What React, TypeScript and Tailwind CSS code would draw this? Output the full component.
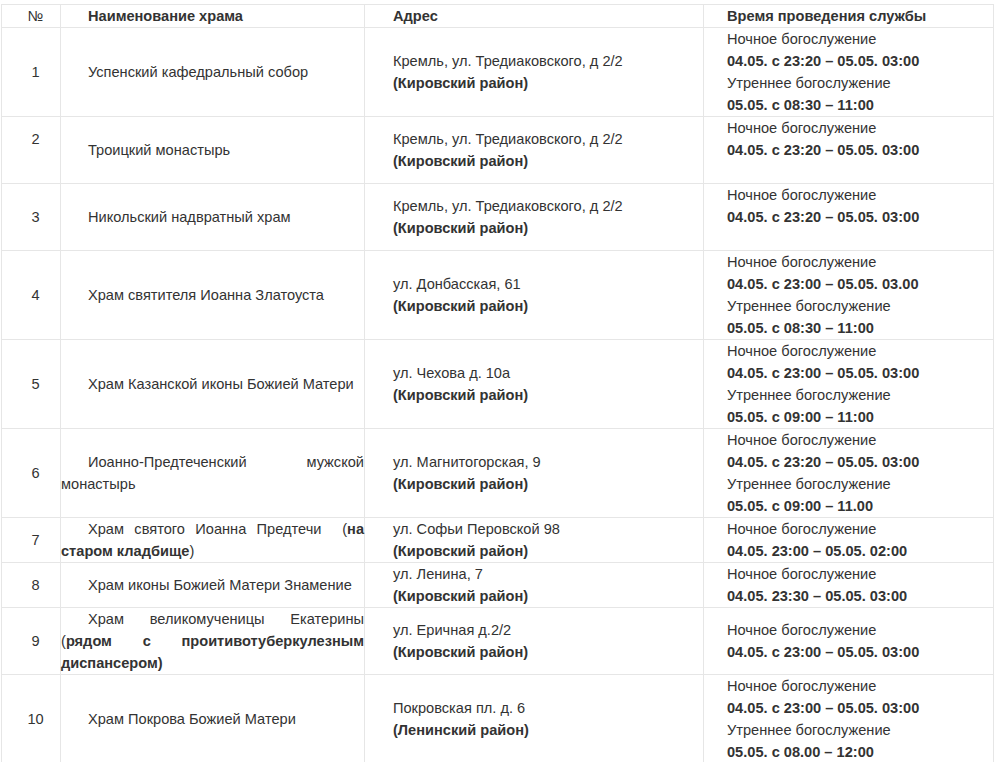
import React from "react";

type Row = {
  n: string;
  nBlank?: boolean;
  name: React.ReactNode;
  addr: string;
  district: string;
  times: [string, string][];
  blank?: boolean;
};

const night = "Ночное богослужение";
const morning = "Утреннее богослужение";

const rows: Row[] = [
  {
    n: "1",
    name: "Успенский кафедральный собор",
    addr: "Кремль, ул. Тредиаковского, д 2/2",
    district: "(Кировский район)",
    times: [
      [night, "04.05. с 23:20 – 05.05. 03:00"],
      [morning, "05.05. с 08:30 – 11:00"],
    ],
  },
  {
    n: "2",
    nBlank: true,
    name: "Троицкий монастырь",
    addr: "Кремль, ул. Тредиаковского, д 2/2",
    district: "(Кировский район)",
    times: [[night, "04.05. с 23:20 – 05.05. 03:00"]],
    blank: true,
  },
  {
    n: "3",
    name: "Никольский надвратный храм",
    addr: "Кремль, ул. Тредиаковского, д 2/2",
    district: "(Кировский район)",
    times: [[night, "04.05. с 23:20 – 05.05. 03:00"]],
    blank: true,
  },
  {
    n: "4",
    name: "Храм святителя Иоанна Златоуста",
    addr: "ул. Донбасская, 61",
    district: "(Кировский район)",
    times: [
      [night, "04.05. с 23:00 – 05.05. 03.00"],
      [morning, "05.05. с 08:30 – 11:00"],
    ],
  },
  {
    n: "5",
    name: "Храм Казанской иконы Божией Матери",
    addr: "ул. Чехова д. 10а",
    district: "(Кировский район)",
    times: [
      [night, "04.05. с 23:00 – 05.05. 03:00"],
      [morning, "05.05. с 09:00 – 11:00"],
    ],
  },
  {
    n: "6",
    name: "Иоанно-Предтеченский мужской монастырь",
    addr: "ул. Магнитогорская, 9",
    district: "(Кировский район)",
    times: [
      [night, "04.05. с 23:20 – 05.05. 03:00"],
      [morning, "05.05. с 09:00 – 11.00"],
    ],
  },
  {
    n: "7",
    name: (
      <>
        Храм святого Иоанна Предтечи&nbsp; (<b>на старом кладбище</b>)
      </>
    ),
    addr: "ул. Софьи Перовской 98",
    district: "(Кировский район)",
    times: [[night, "04.05. 23:00 – 05.05. 02:00"]],
  },
  {
    n: "8",
    name: "Храм иконы Божией Матери Знамение",
    addr: "ул. Ленина, 7",
    district: "(Кировский район)",
    times: [[night, "04.05. 23:30 – 05.05. 03:00"]],
  },
  {
    n: "9",
    name: (
      <>
        Храм великомученицы Екатерины (
        <b>рядом&nbsp;с проитивотуберкулезным диспансером)</b>
      </>
    ),
    addr: "ул. Еричная д.2/2",
    district: "(Кировский район)",
    times: [[night, "04.05. с 23:00 – 05.05. 03:00"]],
  },
  {
    n: "10",
    name: "Храм Покрова Божией Матери",
    addr: "Покровская пл. д. 6",
    district: "(Ленинский район)",
    times: [
      [night, "04.05. с 23:00 – 05.05. 03:00"],
      [morning, "05.05. с 08.00 – 12:00"],
    ],
  },
];

const cell = "border border-[#e6e6e6] p-0 align-middle";

export default function App() {
  return (
    <div
      className="min-h-screen bg-white pt-[4px] pl-[1px] text-[14.6px] leading-[22px] text-[#333]"
      style={{ fontFamily: '"Liberation Sans", Arial, sans-serif' }}
    >
      <table className="w-[992px] table-fixed border-collapse">
        <colgroup>
          <col className="w-[59px]" />
          <col className="w-[304px]" />
          <col className="w-[339px]" />
          <col className="w-[290px]" />
        </colgroup>
        <thead>
          <tr>
            <th className={`${cell} pl-[9px] text-center font-normal`}>№</th>
            <th className={`${cell} text-left indent-[27px] font-bold`}>
              Наименование храма
            </th>
            <th className={`${cell} pl-[28px] text-left font-bold`}>Адрес</th>
            <th className={`${cell} pl-[23px] text-left font-bold`}>
              Время проведения службы
            </th>
          </tr>
        </thead>
        <tbody>
          {rows.map((r) => (
            <tr key={r.n}>
              <td className={`${cell} pl-[9px] text-center`}>
                <p>{r.n}</p>
                {r.nBlank && <p>&nbsp;</p>}
              </td>
              <td className={`${cell} text-justify indent-[27px]`}>{r.name}</td>
              <td className={`${cell} pl-[28px]`}>
                <p>{r.addr}</p>
                <p className="font-bold">{r.district}</p>
              </td>
              <td className={`${cell} pl-[23px]`}>
                {r.times.map(([label, time]) => (
                  <React.Fragment key={label}>
                    <p>{label}</p>
                    <p className="font-bold">{time}</p>
                  </React.Fragment>
                ))}
                {r.blank && <p>&nbsp;</p>}
              </td>
            </tr>
          ))}
        </tbody>
      </table>
    </div>
  );
}
